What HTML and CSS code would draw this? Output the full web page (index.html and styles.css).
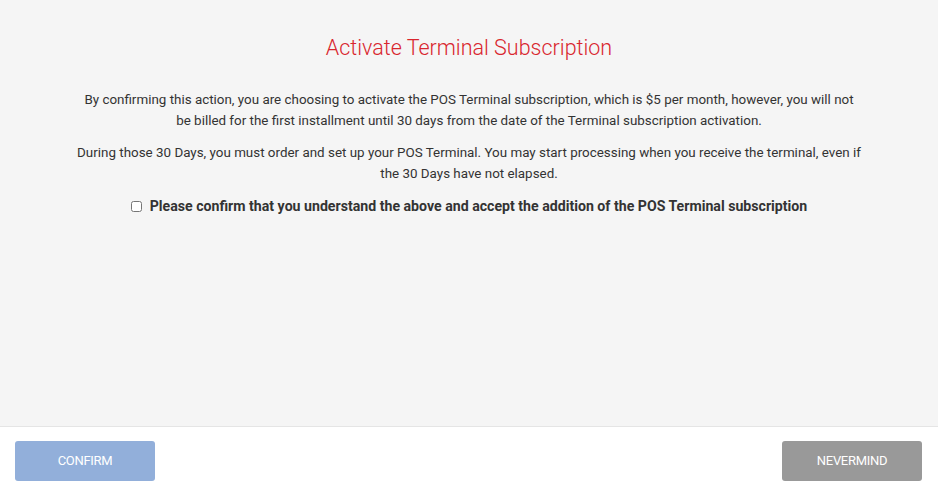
FILE: index.html
```html
<!DOCTYPE html>
<html lang="en">
<head>
    <meta charset="UTF-8">
    <meta name="viewport" content="width=device-width, initial-scale=1.0">
    <title>Activate Terminal Subscription</title>
    <link rel="stylesheet" href="styles.css">
</head>
<body>
    <div class="modal">
        <div class="modal-body">
            <h2 class="modal-title">Activate Terminal Subscription</h2>
            <div class="modal-text">
                <p>By confirming this action, you are choosing to activate the POS Terminal subscription, which is $5 per month, however, you will not be billed for the first installment until 30 days from the date of the Terminal subscription activation.</p>
                <p>During those 30 Days, you must order and set up your POS Terminal. You may start processing when you receive the terminal, even if the 30 Days have not elapsed.</p>
            </div>
            <label class="confirm-check">
                <input type="checkbox">
                <span>Please confirm that you understand the above and accept the addition of the POS Terminal subscription</span>
            </label>
        </div>
        <div class="modal-footer">
            <a href="#" class="btn btn-confirm">CONFIRM</a>
            <a href="#" class="btn btn-cancel">NEVERMIND</a>
        </div>
    </div>
</body>
</html>
```

FILE: styles.css
```css
html, body{
    margin: 0;
    padding: 0;
    height: 100%;
}
body{
    font-family: "Roboto", "Liberation Sans", sans-serif;
    color: #333;
    background: #fff;
}
.modal{
    display: flex;
    flex-direction: column;
    height: 100%;
}
.modal-body{
    flex: 1;
    background: #f5f5f5;
    border-bottom: 1px solid #e5e5e5;
    padding: 35px 20px 0;
    text-align: center;
}
.modal-title{
    margin: 0 0 28px;
    font-size: 21.5px;
    font-weight: 300;
    color: #d9262e;
    line-height: 26px;
}
.modal-text{
    max-width: 785px;
    margin: 0 auto;
}
.modal-text p{
    margin: 0 0 11px;
    font-size: 13.4px;
    line-height: 21px;
    color: #333;
}
.confirm-check{
    display: inline-flex;
    align-items: center;
    gap: 8px;
    margin-top: 3px;
    font-size: 14.15px;
    font-weight: 700;
    color: #333;
}
.confirm-check input{
    margin: 0;
    width: 11px;
    height: 11px;
}
.modal-footer{
    display: flex;
    justify-content: space-between;
    padding: 14px 16px 12px 15px;
}
.btn{
    display: inline-block;
    width: 140px;
    height: 40px;
    line-height: 40px;
    border-radius: 3px;
    text-align: center;
    text-decoration: none;
    color: #fff;
    font-size: 13px;
    letter-spacing: -0.3px;
}
.btn-confirm{background: #92afda;}
.btn-cancel{background: #999;}
```
